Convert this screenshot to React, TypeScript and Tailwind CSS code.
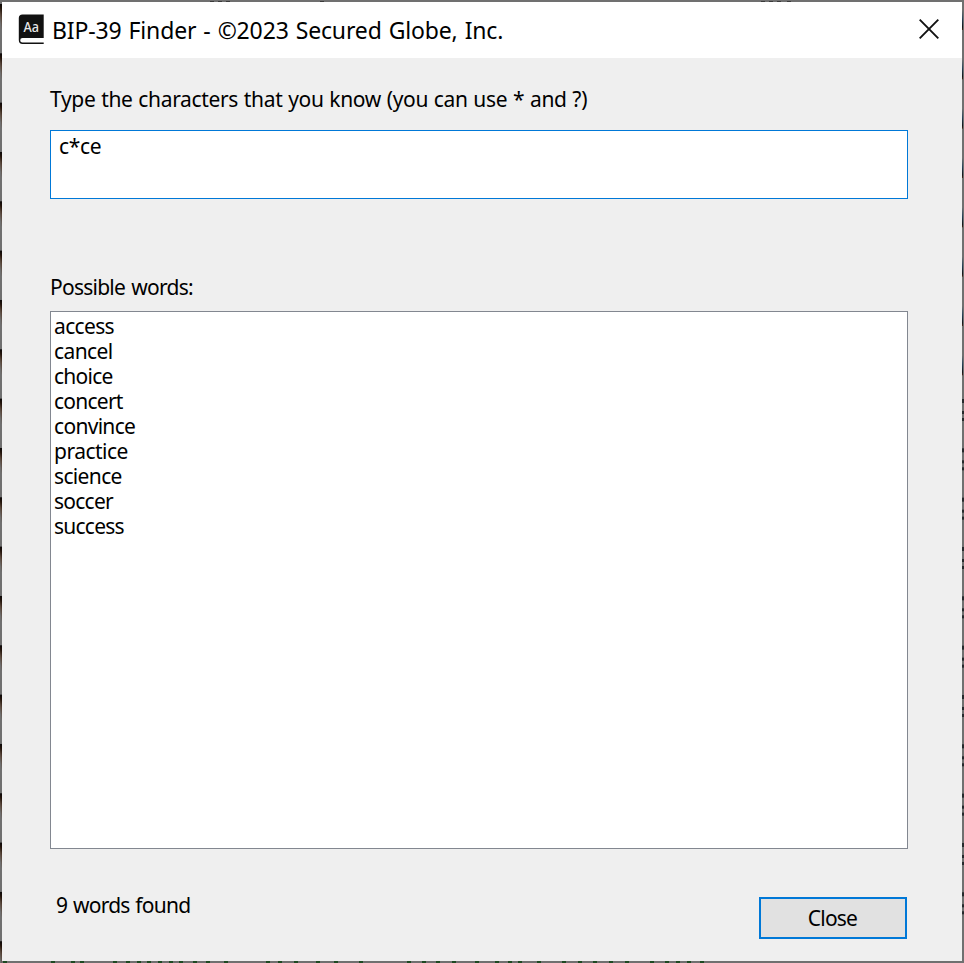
import React from "react";

const words = [
  { text: "access", tracking: "tracking-[-0.65px]" },
  { text: "cancel", tracking: "tracking-[-0.6px]" },
  { text: "choice", tracking: "tracking-[-0.75px]" },
  { text: "concert", tracking: "tracking-[-0.75px]" },
  { text: "convince", tracking: "tracking-[-0.7px]" },
  { text: "practice", tracking: "tracking-[-0.5px]" },
  { text: "science", tracking: "tracking-[-0.65px]" },
  { text: "soccer", tracking: "tracking-[-0.75px]" },
  { text: "success", tracking: "tracking-[-0.75px]" },
];

const bottomSpecks = [
  3, 51, 71, 80, 113, 126, 137, 147, 158, 169, 179, 193, 206, 224, 266, 278, 294, 316, 334, 359,
  407, 422, 436, 452, 475, 495, 508, 518, 537, 562, 578, 593, 609, 625, 650, 665, 676, 687, 700,
];
const topSpecks = [210, 218, 226, 320, 761, 769, 777, 787];

// What shows of the desktop through the translucent window border.
function WindowEdge() {
  return (
    <svg width="964" height="963" className="pointer-events-none absolute -left-0.5 -top-0.5">
      <defs>
        <linearGradient id="left" x1="0" y1="0" x2="0" y2="1">
          <stop offset="0" stopColor="#0b0808" />
          <stop offset=".2" stopColor="#24150c" />
          <stop offset=".5" stopColor="#58463a" />
          <stop offset="1" stopColor="#707070" />
        </linearGradient>
        <linearGradient id="right" x1="0" y1="0" x2="0" y2="1">
          <stop offset="0" stopColor="#707070" />
          <stop offset=".45" stopColor="#28415a" />
          <stop offset=".85" stopColor="#141519" />
          <stop offset="1" stopColor="#4a2418" />
        </linearGradient>
      </defs>
      {Array.from({ length: 20 }, (_, i) => (
        <g key={i}>
          <rect x="0" y={4 + i * 49.33} width="1" height="20" fill="url(#left)" />
          <rect x="1" y={4 + i * 49.33} width="1" height="26" fill="url(#left)" />
        </g>
      ))}
      {Array.from({ length: 8 }, (_, i) => (
        <rect key={i} x="962" y={10 + i * 49.33} width="1" height="20" fill="url(#right)" />
      ))}
      {Array.from({ length: 11 }, (_, i) => (
        <g key={i} fill="#26292c">
          <rect x="962" y={399 + i * 49.33} width="2" height="4" />
          <rect x="962" y={411 + i * 49.33} width="2" height="3" />
          <rect x="962" y={418 + i * 49.33} width="2" height="3" />
        </g>
      ))}
      {bottomSpecks.map((x) => (
        <rect key={x} x={x} y="961" width="4" height="2" fill="#1d4a22" />
      ))}
      {topSpecks.map((x) => (
        <rect key={x} x={x} y="1" width="4" height="1" fill="#3a3a3a" />
      ))}
    </svg>
  );
}

export default function App() {
  return (
    <div className="relative flex h-[963px] w-[964px] flex-col border-2 border-[#707070] bg-[#efefef] font-['Noto_Sans','Open_Sans',sans-serif] text-black">
      <WindowEdge />
      <header className="relative flex h-14 shrink-0 items-center bg-white pl-4">
        <svg width="27" height="32" viewBox="0 0 27 32" className="-mt-px shrink-0">
          <path d="M4.5 .5H25.7V24H4.5Q2.2 24 2.2 26.2T4.5 28.5H25.7V29.9H4.5Q.8 29.9.8 26V4Q.8.5 4.5 .5Z" fill="#111" />
          <text x="5.6" y="17.8" fontSize="14" fontWeight="500" fill="#e8e8e8" textLength="15.5" lengthAdjust="spacingAndGlyphs">Aa</text>
        </svg>
        <h1 className="ml-[7px] text-[23px] leading-8 tracking-[-0.15px] [word-spacing:1.2px]">BIP-39 Finder - ©2023 Secured Globe, Inc.</h1>
        <button aria-label="Close window" className="-mt-0.5 ml-auto mr-[22px]">
          <svg width="22" height="22" viewBox="0 0 22 22" className="block">
            <path d="M1.7 1.7L20.3 20.3M20.3 1.7L1.7 20.3" stroke="#111" strokeWidth="1.9" />
          </svg>
        </button>
      </header>
      <main className="relative flex flex-1 flex-col px-12 text-[21px] leading-[25px]">
        <label className="mt-[29px] tracking-[-0.33px] [word-spacing:0.6px]">Type the characters that you know (you can use * and ?)</label>
        <div className="mt-[18px] h-[69px] w-[858px] border border-[#0078d7] bg-white pl-2 pt-[3px] tracking-[-0.3px]">c*ce</div>
        <p className="mt-[76px] tracking-[-0.75px] [word-spacing:1.5px]">Possible words:</p>
        <ul className="mt-[11px] h-[538px] w-[858px] border border-[#828790] bg-white pl-[3px] pt-[2px]">
          {words.map((w) => <li key={w.text} className={w.tracking}>{w.text}</li>)}
        </ul>
      </main>
      <footer className="relative flex h-[112px] shrink-0 pl-[54px] text-[21px] leading-[25px]">
        <span className="mt-[44px] tracking-[-0.75px] [word-spacing:1px]">9 words found</span>
        <button className="ml-auto mr-[55px] mt-[48px] h-[42px] w-[148px] border-2 border-[#0078d7] bg-[#e1e1e1] pr-px tracking-[-0.8px]">Close</button>
      </footer>
    </div>
  );
}
